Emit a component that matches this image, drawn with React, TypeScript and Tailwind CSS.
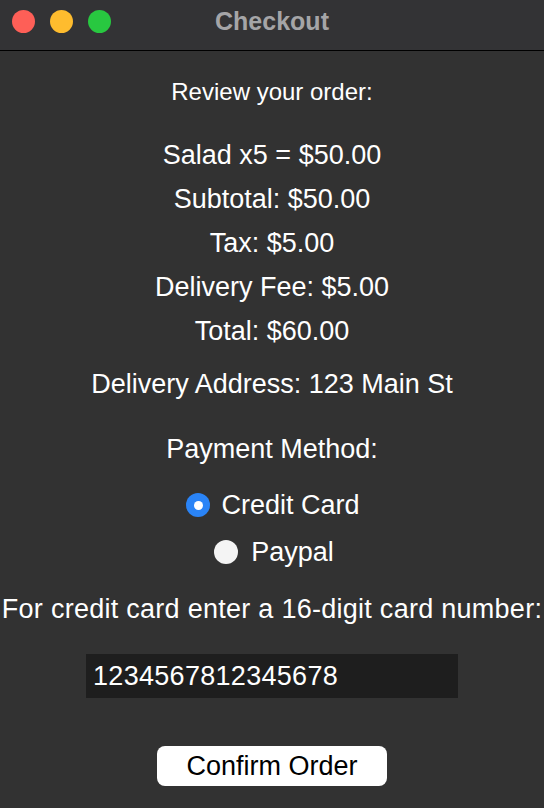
export default function App() {
  return (
    <div
      className="w-[544px] h-[808px] bg-[#323232] flex flex-col text-white overflow-hidden"
      style={{ fontFamily: "'Liberation Sans', Arial, sans-serif" }}
    >
      {/* Title bar */}
      <div className="relative h-[51px] shrink-0 bg-[#333335] border-b border-black flex items-center justify-center">
        <div className="absolute left-[12px] top-[10px] flex gap-[15px]">
          <span className="w-[23px] h-[23px] rounded-full bg-[#fe5f57]" />
          <span className="w-[23px] h-[23px] rounded-full bg-[#febc2e]" />
          <span className="w-[23px] h-[23px] rounded-full bg-[#28c840]" />
        </div>
        <h1 className="text-[25px] font-bold text-[#a5a5a7] leading-none -mt-[8px]">Checkout</h1>
      </div>

      {/* Body */}
      <div className="flex flex-col items-center pt-[19px]">
        <div className="h-[44px] flex items-center text-[24px]">Review your order:</div>

        <div className="mt-[19px] flex flex-col items-center text-[27px]">
          <div className="h-[44px] flex items-center">Salad x5 = $50.00</div>
          <div className="h-[44px] flex items-center">Subtotal: $50.00</div>
          <div className="h-[44px] flex items-center">Tax: $5.00</div>
          <div className="h-[44px] flex items-center">Delivery Fee: $5.00</div>
          <div className="h-[44px] flex items-center">Total: $60.00</div>
        </div>

        <div className="mt-[9px] h-[44px] flex items-center text-[27px]">Delivery Address: 123 Main St</div>

        <div className="mt-[21px] h-[44px] flex items-center text-[27px]">Payment Method:</div>

        <label className="mt-[12px] h-[44px] flex items-center gap-[11px] text-[27px] pl-[2px]">
          <span className="w-[24px] h-[24px] rounded-full bg-[#2a84f7] flex items-center justify-center">
            <span className="w-[9px] h-[9px] rounded-full bg-white" />
          </span>
          Credit Card
        </label>
        <label className="mt-[3px] h-[44px] flex items-center gap-[13px] text-[27px] pl-[4px]">
          <span className="w-[24px] h-[24px] rounded-full bg-[#f4f4f4]" />
          Paypal
        </label>

        <div className="mt-[13px] h-[44px] flex items-center text-[27px] tracking-[0.27px] whitespace-nowrap">
          For credit card enter a 16-digit card number:
        </div>

        <div className="mt-[23px] w-[372px] h-[44px] bg-[#1e1e1e] flex items-center px-[7px] text-[27px] tracking-[0.3px]">
          1234567812345678
        </div>

        <button className="mt-[48px] w-[230px] h-[40px] rounded-[8px] bg-white text-black text-[27px] flex items-center justify-center">
          Confirm Order
        </button>
      </div>
    </div>
  );
}
